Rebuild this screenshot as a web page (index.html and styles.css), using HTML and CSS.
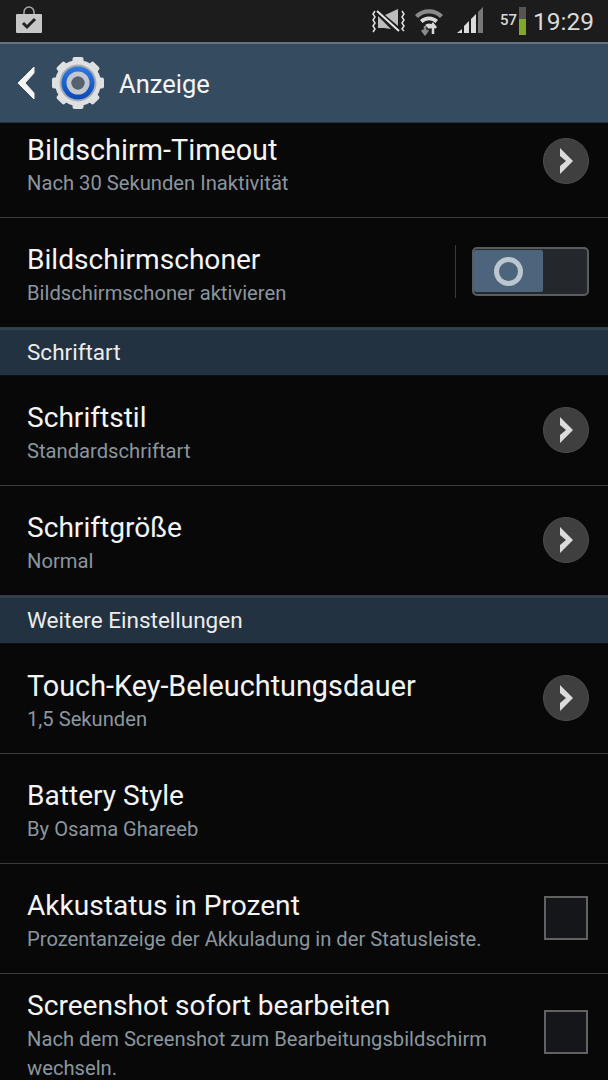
FILE: index.html
```html
<!DOCTYPE html>
<html lang="de">
<head>
    <meta charset="UTF-8">
    <meta name="viewport" content="width=device-width, initial-scale=1.0">
    <title>Anzeige</title>
    <link rel="stylesheet" href="styles.css">
</head>
<body>
    <div class="screen">
        <div class="statusbar">
            <svg class="bag" width="28" height="28" viewBox="0 0 28 28">
                <path d="M9 9V6a5 5 0 0 1 10 0v3" fill="none" stroke="#a8a8a8" stroke-width="1.5"/>
                <rect x="1" y="8" width="26" height="19" rx="1" fill="#c6c6c6"/>
                <path d="M8 17l4 4 8-8" fill="none" stroke="#222" stroke-width="3"/>
            </svg>
            <div class="status-right">
                <svg width="34" height="26" viewBox="0 0 34 26">
                    <path d="M13 7L26 1v17zM6 8l13 13-7-1H6z" fill="#bdbdbd"/>
                    <path d="M5 3l22 20" stroke="#e6e6e6" stroke-width="2"/>
                    <path d="M3 3L1 6l2 3-2 3 2 3-2 3 2 3-2 3M30 3l2 3-2 3 2 3-2 3 2 3-2 3 2 2" fill="none" stroke="#e0e0e0" stroke-width="1.500"/>
                </svg>
                <svg class="wifi" width="30" height="30" viewBox="0 0 30 30">
                    <path d="M1 9a20 20 0 0 1 28 0l-3 3a16 16 0 0 0-22 0z" fill="#8a8a8a"/>
                    <path d="M6 14a13 13 0 0 1 18 0l-2.500 3a9 9 0 0 0-13 0z" fill="#d8d8d8"/>
                    <path d="M11 19a6 6 0 0 1 8 0l-4 4z" fill="#d8d8d8"/>
                    <path d="M11 20v7M8 24l3 4 3-4" fill="none" stroke="#8a8a8a" stroke-width="2.500"/>
                    <path d="M19 28v-9M16 22l3-4 3 4" fill="none" stroke="#d8d8d8" stroke-width="2.500"/>
                </svg>
                <svg class="signal" width="28" height="28" viewBox="0 0 28 28">
                    <path d="M1 26l5-4v4zM8 26v-7l5-5v12zM15 26V12l5-5v19z" fill="#dcdcdc"/>
                    <path d="M22 26V5l5-5v26z" fill="#777"/>
                </svg>
                <span class="batt-num">57</span>
                <div class="battery"><div class="battery-fill"></div></div>
                <span class="clock">19:29</span>
            </div>
        </div>

        <div class="actionbar">
            <svg class="back" width="20" height="34" viewBox="0 0 20 34">
                <path d="M18 1L2 17l16 16v-6L9 17l9-10z" fill="#f4f4f4" stroke="#f4f4f4" stroke-linejoin="round"/>
            </svg>
            <svg class="gear" width="54" height="54" viewBox="0 0 54 54">
                <defs>
                    <linearGradient id="gearBlue" x1="0" y1="0" x2="0" y2="1">
                        <stop offset="0" stop-color="#2f7ae0"/>
                        <stop offset="1" stop-color="#0c48b8"/>
                    </linearGradient>
                </defs>
                <g fill="#dfe0e2">
                    <circle cx="27" cy="27" r="23"/>
                    <rect x="21.500" y="1" width="11" height="52" rx="2"/>
                    <rect x="21.500" y="1" width="11" height="52" rx="2" transform="rotate(45 27 27)"/>
                    <rect x="21.500" y="1" width="11" height="52" rx="2" transform="rotate(90 27 27)"/>
                    <rect x="21.500" y="1" width="11" height="52" rx="2" transform="rotate(135 27 27)"/>
                </g>
                <circle cx="27" cy="27" r="18.500" fill="#a9adb2"/>
                <circle cx="27" cy="27" r="16.500" fill="url(#gearBlue)"/>
                <circle cx="27" cy="27" r="9" fill="none" stroke="#c4c8cc" stroke-width="5"/>
                <circle cx="27" cy="27" r="6.500" fill="#56626e"/>
            </svg>
            <span class="actionbar-title">Anzeige</span>
        </div>

        <div class="list">
            <div class="row row-first">
                <div class="row-text">
                    <div class="row-title title-wide">Bildschirm-Timeout</div>
                    <div class="row-sub">Nach 30 Sekunden Inaktivität</div>
                </div>
                <div class="arrow"><svg width="18" height="28" viewBox="0 0 18 28"><path d="M3 1l13 13L3 27v-8l6-5-6-5z" fill="#dcdcdc"/></svg></div>
            </div>
            <div class="row">
                <div class="row-text">
                    <div class="row-title">Bildschirmschoner</div>
                    <div class="row-sub">Bildschirmschoner aktivieren</div>
                </div>
                <div class="vline"></div>
                <div class="toggle"><div class="toggle-knob"><div class="toggle-ring"></div></div></div>
            </div>
            <div class="section">Schriftart</div>
            <div class="row">
                <div class="row-text">
                    <div class="row-title">Schriftstil</div>
                    <div class="row-sub">Standardschriftart</div>
                </div>
                <div class="arrow"><svg width="18" height="28" viewBox="0 0 18 28"><path d="M3 1l13 13L3 27v-8l6-5-6-5z" fill="#dcdcdc"/></svg></div>
            </div>
            <div class="row">
                <div class="row-text">
                    <div class="row-title">Schriftgröße</div>
                    <div class="row-sub">Normal</div>
                </div>
                <div class="arrow"><svg width="18" height="28" viewBox="0 0 18 28"><path d="M3 1l13 13L3 27v-8l6-5-6-5z" fill="#dcdcdc"/></svg></div>
            </div>
            <div class="section">Weitere Einstellungen</div>
            <div class="row">
                <div class="row-text">
                    <div class="row-title title-wide">Touch-Key-Beleuchtungsdauer</div>
                    <div class="row-sub">1,5 Sekunden</div>
                </div>
                <div class="arrow"><svg width="18" height="28" viewBox="0 0 18 28"><path d="M3 1l13 13L3 27v-8l6-5-6-5z" fill="#dcdcdc"/></svg></div>
            </div>
            <div class="row">
                <div class="row-text">
                    <div class="row-title">Battery Style</div>
                    <div class="row-sub">By Osama Ghareeb</div>
                </div>
            </div>
            <div class="row">
                <div class="row-text">
                    <div class="row-title">Akkustatus in Prozent</div>
                    <div class="row-sub">Prozentanzeige der Akkuladung in der Statusleiste.</div>
                </div>
                <div class="check"></div>
            </div>
            <div class="row row-last">
                <div class="row-text">
                    <div class="row-title">Screenshot sofort bearbeiten</div>
                    <div class="row-sub">Nach dem Screenshot zum Bearbeitungsbildschirm wechseln.</div>
                </div>
                <div class="check"></div>
            </div>
        </div>
    </div>
</body>
</html>
```

FILE: styles.css
```css
html, body {
    margin: 0;
    padding: 0;
    background: #080808;
}
.screen {
    width: 608px;
    height: 1080px;
    overflow: hidden;
    display: flex;
    flex-direction: column;
    font-family: Roboto, sans-serif;
    color: #f2f2f2;
}
.statusbar {
    height: 42px;
    flex: none;
    background: #1c1c1c;
    display: flex;
    align-items: center;
    justify-content: space-between;
    padding: 0 14px 0 15px;
}
.bag {
    margin-top: -3px;
}
.status-right {
    display: flex;
    align-items: center;
}
.wifi {
    margin-left: 8px;
}
.signal {
    margin-left: 12px;
}
.batt-num {
    margin-left: 16px;
    font-size: 15px;
    font-weight: 500;
    color: #d8d8d8;
    margin-top: -2px;
}
.battery {
    width: 7px;
    height: 28px;
    margin-left: 2px;
    background: #555;
    display: flex;
    align-items: flex-end;
}
.battery-fill {
    width: 100%;
    height: 16px;
    background: #80a82c;
}
.clock {
    margin-left: 7px;
    font-size: 24.5px;
    color: #dadada;
}
.actionbar {
    height: 81px;
    flex: none;
    box-sizing: border-box;
    background: #344b60;
    border-top: 2px solid #62717f;
    border-bottom: 1px solid #26323e;
    display: flex;
    align-items: center;
    padding-left: 16px;
}
.gear {
    margin-left: 15px;
}
.actionbar-title {
    margin-left: 14px;
    margin-top: 2px;
    font-size: 25.5px;
    color: #f4f4f4;
}
.list {
    flex: 1;
    overflow: hidden;
}
.row {
    height: 110px;
    box-sizing: border-box;
    border-bottom: 1px solid #3a3a3a;
    display: flex;
    align-items: center;
    padding: 0 20px 0 27px;
}
.row-first {
    height: 95px;
}
.row-first .row-text {
    margin-top: -15px;
}
.row-first .arrow {
    margin-top: -18px;
}
.row-text {
    flex: 1;
    min-width: 0;
    padding-top: 3px;
}
.row-title {
    font-size: 28.1px;
    line-height: 34px;
    color: #f4f4f4;
}
.title-wide {
    font-size: 28.8px;
}
.row-sub {
    font-size: 20.2px;
    line-height: 25px;
    color: #8b969e;
    margin-top: 4px;
    max-width: 480px;
}
.row-last {
    border-bottom: none;
    align-items: flex-start;
    padding-top: 12px;
}
.row-last .row-sub {
    line-height: 29px;
    margin-top: 2px;
}
.row-last .check {
    margin-top: 24px;
}
.section {
    height: 48px;
    box-sizing: border-box;
    background: #223240;
    border-top: 2px solid #2f4252;
    border-bottom: 1px solid #0c1014;
    display: flex;
    align-items: center;
    padding: 0 0 2px 27px;
    font-size: 22.5px;
    color: #ececec;
}
.arrow {
    width: 46px;
    height: 46px;
    margin: -2px -1px 0 0;
    border-radius: 50%;
    background: #3f3f3f;
    border: 1px solid #4d4d4d;
    box-sizing: border-box;
    display: flex;
    align-items: center;
    justify-content: center;
}
.vline {
    width: 1px;
    height: 53px;
    background: #3a3a3a;
    margin: -2px 16px 0 0;
}
.toggle {
    width: 117px;
    height: 49px;
    box-sizing: border-box;
    margin: -2px -1px 0 0;
    border: 2px solid #5a5d60;
    border-radius: 5px;
    background: #24282c;
    padding: 1px 0;
}
.toggle-knob {
    width: 69px;
    height: 42px;
    background: #4c647c;
    border-radius: 2px;
    display: flex;
    align-items: center;
    justify-content: center;
}
.toggle-ring {
    width: 29px;
    height: 29px;
    box-sizing: border-box;
    border: 5px solid #bcc6ce;
    border-radius: 50%;
}
.check {
    width: 44px;
    height: 44px;
    box-sizing: border-box;
    margin-top: -2px;
    border: 2px solid #626262;
    background: #14161a;
}
```
